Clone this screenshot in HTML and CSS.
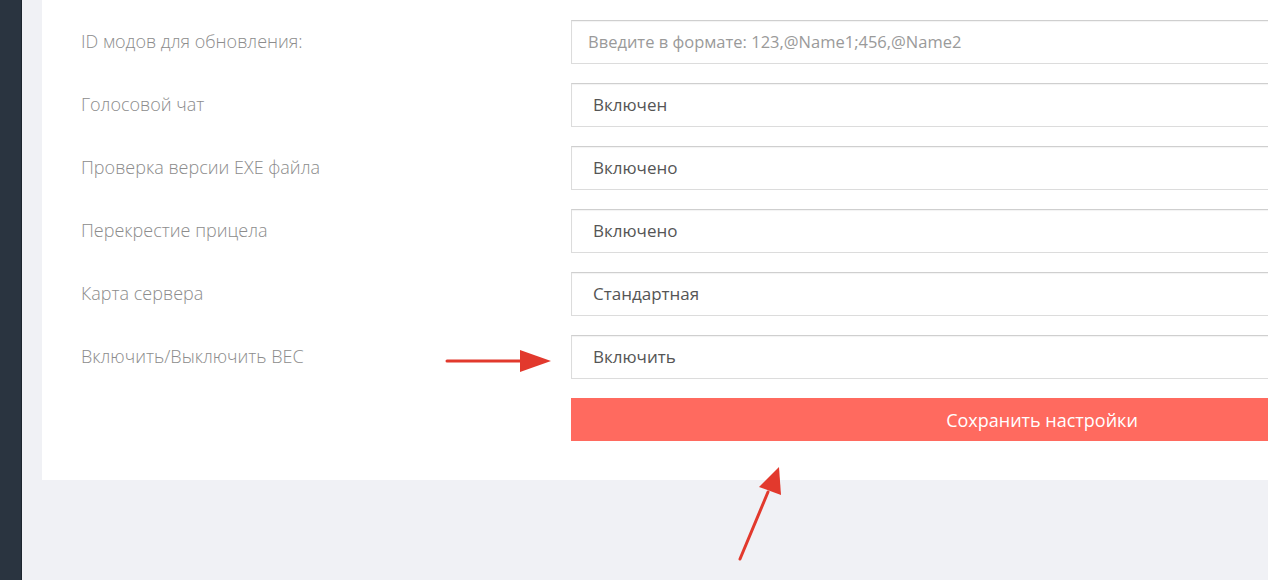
FILE: index.html
```html
<html>

<head>
    <title>Настройки сервера</title>
    <link rel="stylesheet" href="styles.css">
</head>

<body>
    <div class="sidebar"></div>
    <main>
        <div class="card">
            <div class="form-row">
                <div class="form-label">ID модов для обновления:</div>
                <div class="form-field placeholder">Введите в формате: 123,@Name1;456,@Name2</div>
            </div>
            <div class="form-row">
                <div class="form-label">Голосовой чат</div>
                <div class="form-field select">Включен</div>
            </div>
            <div class="form-row">
                <div class="form-label">Проверка версии EXE файла</div>
                <div class="form-field select">Включено</div>
            </div>
            <div class="form-row">
                <div class="form-label">Перекрестие прицела</div>
                <div class="form-field select">Включено</div>
            </div>
            <div class="form-row">
                <div class="form-label">Карта сервера</div>
                <div class="form-field select">Стандартная</div>
            </div>
            <div class="form-row">
                <div class="form-label">Включить/Выключить BEC</div>
                <div class="form-field select">Включить</div>
            </div>
            <div class="form-row">
                <div class="form-label"></div>
                <button class="save-button">Сохранить настройки</button>
            </div>
        </div>
    </main>

    <!-- annotation arrows drawn over the screenshot -->
    <svg class="arrows" width="1268" height="580" viewBox="0 0 1268 580">
        <line x1="447" y1="361" x2="524" y2="361" stroke="#e2392d" stroke-width="3" stroke-linecap="round" />
        <polygon points="551,361 520,350 520,372" fill="#e2392d" />
        <line x1="740" y1="559" x2="768" y2="492" stroke="#e2392d" stroke-width="3" stroke-linecap="round" />
        <polygon points="779,467 759,487 781,495" fill="#e2392d" />
    </svg>
</body>

</html>
```

FILE: styles.css
```css
* {
    box-sizing: border-box;
}

html, body {
    margin: 0;
    padding: 0;
    width: 100%;
    height: 100%;
    overflow: hidden;
}

body {
    display: flex;
    background: #f0f1f5;
    font-family: "Open Sans", sans-serif;
}

.sidebar {
    width: 22px;
    flex-shrink: 0;
    background: #2a3440;
    border-right: 1px solid #1d252e;
}

main {
    flex: 1;
    padding-left: 20px;
    overflow: hidden;
}

.card {
    width: 1472px;
    background: #fff;
    padding: 20px 0 39px 39px;
    display: flex;
    flex-direction: column;
    gap: 19px;
}

.form-row {
    display: flex;
    align-items: center;
}

.form-label {
    width: 490px;
    flex-shrink: 0;
    font-size: 18px;
    font-weight: 300;
    color: #8c8c8c;
    margin-top: -2px;
}

.form-field {
    width: 942px;
    height: 44px;
    border: 1px solid #dcdcdc;
    border-top-color: #cfcfcf;
    box-shadow: inset 0 1px 1px rgba(0, 0, 0, 0.05);
    display: flex;
    align-items: center;
    font-size: 17px;
    padding-bottom: 1px;
}

.placeholder {
    padding-left: 16px;
    color: #9a9a9a;
    font-size: 16.5px;
}

.select {
    padding-left: 21px;
    color: #555;
}

.save-button {
    width: 942px;
    height: 43px;
    border: none;
    background: #ff6a5f;
    color: #fff;
    font-family: "Open Sans", sans-serif;
    font-size: 18px;
}

.arrows {
    position: absolute;
    top: 0;
    left: 0;
}
```
